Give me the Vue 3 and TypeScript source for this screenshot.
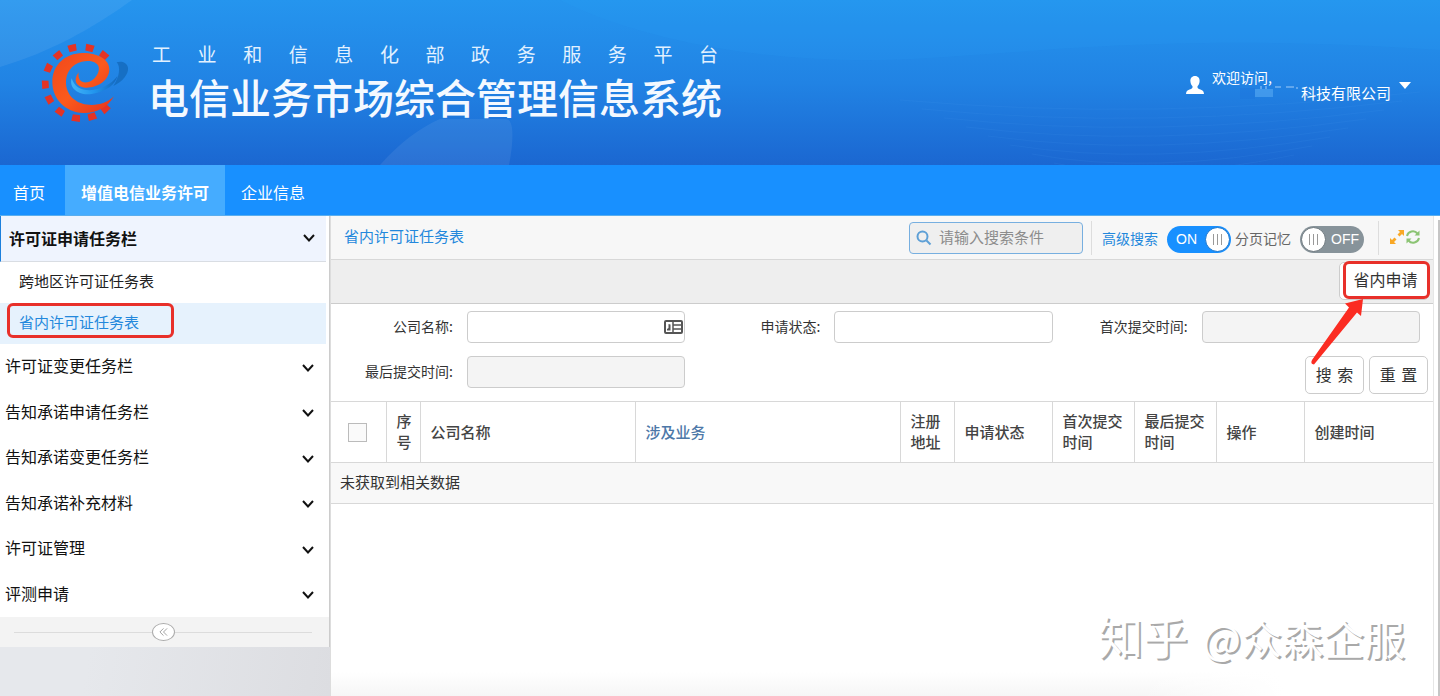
<script setup lang="ts">
import { ref } from 'vue'

interface Column {
  title: string
  cls: string
}

const keyword = ref('')
const advanced = ref(true)
const remember = ref(false)

const subItems: string[] = ['跨地区许可证任务表', '省内许可证任务表']
const groups: string[] = [
  '许可证变更任务栏',
  '告知承诺申请任务栏',
  '告知承诺变更任务栏',
  '告知承诺补充材料',
  '许可证管理',
  '评测申请',
]
const columns: Column[] = [
  { title: '序号', cls: 'c-index' },
  { title: '公司名称', cls: 'c-company' },
  { title: '涉及业务', cls: 'c-business' },
  { title: '注册地址', cls: 'c-address' },
  { title: '申请状态', cls: 'c-state' },
  { title: '首次提交时间', cls: 'c-first' },
  { title: '最后提交时间', cls: 'c-last' },
  { title: '操作', cls: 'c-action' },
  { title: '创建时间', cls: 'c-created' },
]
const teeth: number[] = [-104, -76, -50, -130, -156, -183, 152, 126, 98, 72, 47]
const ripples: number[] = [0, 1, 2, 3, 4, 5, 6, 7]
</script>

<template>
  <div class="page">
    <header class="banner">
      <svg class="banner-art" viewBox="0 0 1440 165" preserveAspectRatio="none" aria-hidden="true">
        <path d="M0 0H132C90 30 50 52 0 67Z" fill="#fff" fill-opacity=".07" />
        <path d="M380 165C400 142 420 128 440 119H506C514 119 514 140 509 165Z" fill="#fff" fill-opacity=".07" />
        <path d="M560 0C640 40 760 62 880 60S1150 30 1440 50V0Z" fill="#28a5f5" fill-opacity=".14" />
        <path
          v-for="n in ripples"
          :key="n"
          :d="`M${900 + n * 22} ${100 + n * 9}Q1150 ${122 + n * 9} ${1420 - n * 18} ${92 + n * 9}`"
          fill="none"
          stroke="#4aa0ee"
          stroke-opacity=".12"
        />
      </svg>
      <svg class="logo" viewBox="120 120 270 249" role="img" aria-label="工业和信息化部">
        <defs>
          <linearGradient id="flame" x1="0" y1="0" x2="1" y2="1">
            <stop offset="0" stop-color="#f0481c" />
            <stop offset=".5" stop-color="#fb5a1c" />
            <stop offset="1" stop-color="#e5321c" />
          </linearGradient>
          <linearGradient id="swoosh" x1="0" y1="0" x2="1" y2="0">
            <stop offset="0" stop-color="#41b4f8" />
            <stop offset=".5" stop-color="#2296ee" />
            <stop offset="1" stop-color="#1467bd" />
          </linearGradient>
        </defs>
        <g fill="#e43325">
          <path v-for="a in teeth" :key="a" d="M97 -11L117 -13V13L97 11Z" :transform="`translate(243 245) rotate(${a})`" />
        </g>
        <path
          d="M342 286C322 322 285 337 250 336C195 334 157 293 157 243C157 192 195 157 248 156C297 156 328 177 328 205C328 240 290 262 255 260C228 258 218 238 236 214C232 236 245 247 262 244C285 238 300 215 296 197C290 180 265 177 245 182C215 190 196 215 198 250C202 290 235 312 275 312C300 312 325 303 342 286Z"
          fill="url(#flame)"
        />
        <path d="M215 232C206 262 236 285 275 279C325 270 345 250 352 226C335 250 300 266 270 268C240 268 222 255 215 232Z" fill="url(#swoosh)" />
        <path d="M340 255C370 240 386 218 384 200C381 183 362 179 350 184C362 197 360 225 340 255Z" fill="#166fc4" />
      </svg>
      <div class="titles">
        <p class="platform">工 业 和 信 息 化 部 政 务 服 务 平 台</p>
        <h1 class="system">电信业务市场综合管理信息系统</h1>
      </div>
      <button class="account" type="button">
        <svg class="person" viewBox="0 0 18 18" aria-hidden="true">
          <path d="M9 0C5.800 0 4.200 2.300 4.400 5.200C4.500 7.500 5.400 9 6.500 10.200C6.800 12 6 12.600 3.500 13.600C1.200 14.500 .2 15.500 0 18H18C17.800 15.500 16.800 14.500 14.500 13.600C12 12.600 11.200 12 11.500 10.200C12.600 9 13.500 7.500 13.600 5.200C13.800 2.300 12.200 0 9 0Z" fill="#fff" />
        </svg>
        <span class="who">
          <span class="hello">欢迎访问,</span>
          <span class="company">
            <svg class="veil" viewBox="0 0 60 16" aria-hidden="true">
              <path d="M0 3H15V14H0Z" fill="#1b70dc" fill-opacity=".3" />
              <path d="M15 4H33V12H15Z" fill="#62b1f6" fill-opacity=".5" />
              <path d="M21 1V4M26 1V4M35 2H41M46 2H54M57 2V4" stroke="#d9edff" stroke-opacity=".7" fill="none" />
            </svg>
            <span>科技有限公司</span>
          </span>
        </span>
        <svg class="caret" viewBox="0 0 12 7" aria-hidden="true"><path d="M0 0H12L6 7Z" fill="#fff" /></svg>
      </button>
    </header>

    <nav class="nav">
      <a href="#home">首页</a>
      <a href="#license" class="active">增值电信业务许可</a>
      <a href="#company">企业信息</a>
    </nav>

    <div class="body">
      <aside class="side">
        <div class="menu">
          <button class="group open" type="button">
            <span>许可证申请任务栏</span>
            <svg class="chev" viewBox="0 0 12 8" aria-hidden="true"><path d="M1 1L6 6.500L11 1" /></svg>
          </button>
          <a v-for="(s, i) in subItems" :key="s" href="#task" class="sub" :class="{ current: i === 1 }">
            {{ s }}
            <span v-if="i === 1" class="mark"></span>
          </a>
          <button v-for="g in groups" :key="g" class="group" type="button">
            <span>{{ g }}</span>
            <svg class="chev low" viewBox="0 0 12 8" aria-hidden="true"><path d="M1 1L6 6.500L11 1" /></svg>
          </button>
        </div>
        <div class="collapse">
          <button type="button" class="fold" aria-label="收起">
            <svg viewBox="0 0 10 10" aria-hidden="true"><path d="M5 1L1 5L5 9M9 1L5 5L9 9" /></svg>
          </button>
        </div>
      </aside>

      <main class="main">
        <div class="bar">
          <h2 class="crumb">省内许可证任务表</h2>
          <div class="search">
            <svg viewBox="0 0 16 16" aria-hidden="true"><circle cx="6.500" cy="6.500" r="5" /><path d="M10.500 10.500L14.500 14.500" /></svg>
            <input v-model="keyword" type="text" placeholder="请输入搜索条件" aria-label="搜索条件" />
          </div>
          <div class="options">
            <label class="opt blue">
              <span>高级搜索</span>
              <input v-model="advanced" type="checkbox" />
              <span class="switch" :class="{ on: advanced }"><b>{{ advanced ? 'ON' : 'OFF' }}</b><i></i></span>
            </label>
            <label class="opt">
              <span>分页记忆</span>
              <input v-model="remember" type="checkbox" />
              <span class="switch" :class="{ on: remember }"><b>{{ remember ? 'ON' : 'OFF' }}</b><i></i></span>
            </label>
          </div>
          <div class="tools">
            <button type="button" aria-label="全屏">
              <svg viewBox="0 0 16 16" aria-hidden="true">
                <path d="M9 1H15V7L13 5L10.500 7.500L8.500 5.500L11 3ZM7 15H1V9L3 11L5.500 8.500L7.500 10.500L5 13Z" fill="#f9a825" />
              </svg>
            </button>
            <button type="button" aria-label="刷新">
              <svg viewBox="0 0 16 16" aria-hidden="true">
                <path d="M2 7A6 6 0 0 1 12.500 4.500M14 9A6 6 0 0 1 3.500 11.500" fill="none" stroke="#8cc474" stroke-width="2" />
                <path d="M14.500 1.500V6.500H9.500ZM1.500 14.500V9.500H6.500Z" fill="#8cc474" />
              </svg>
            </button>
          </div>
        </div>

        <div class="actions">
          <button class="btn apply" type="button">省内申请<span class="mark"></span></button>
          <svg class="arrow" viewBox="0 0 60 70" aria-hidden="true">
            <path d="M56 2L38 6.500L42 10.500L5 63Q3 67 7 67.500L50 15.500L54 19Z" fill="#fb2c22" />
          </svg>
        </div>

        <form class="filters" @submit.prevent>
          <div class="field">
            <label for="f-name">公司名称:</label>
            <div class="control">
              <input id="f-name" type="text" />
              <svg class="card" viewBox="0 0 19 14" aria-hidden="true">
                <rect x="1" y="1" width="17" height="12" rx="1" />
                <path d="M9 1V13M9 5H18M9 9H18" stroke-width="1.500" />
                <path d="M3 10.500V9L4.500 8V4L6.500 4.500V10.500Z" fill="#555" stroke="none" />
              </svg>
            </div>
          </div>
          <div class="field">
            <label for="f-state">申请状态:</label>
            <div class="control"><input id="f-state" type="text" /></div>
          </div>
          <div class="field">
            <label for="f-first">首次提交时间:</label>
            <div class="control"><input id="f-first" type="text" readonly /></div>
          </div>
          <div class="field">
            <label for="f-last">最后提交时间:</label>
            <div class="control"><input id="f-last" type="text" readonly /></div>
          </div>
          <div class="buttons">
            <button class="btn" type="submit">搜&emsp13;索</button>
            <button class="btn" type="reset">重&emsp13;置</button>
          </div>
        </form>

        <table class="grid">
          <thead>
            <tr>
              <th class="c-check"><input type="checkbox" aria-label="全选" /></th>
              <th v-for="c in columns" :key="c.title" :class="c.cls">{{ c.title }}</th>
            </tr>
          </thead>
          <tbody>
            <tr>
              <td :colspan="columns.length + 1">未获取到相关数据</td>
            </tr>
          </tbody>
        </table>
        <div class="haze"></div>
      </main>
      <div class="edge"></div>
    </div>
    <div class="watermark"><span class="brand">知乎</span> @众森企服</div>
  </div>
</template>

<style>
body {
  margin: 0;
}
</style>

<style scoped>
.page {
  position: relative;
  display: flex;
  flex-direction: column;
  min-height: 100vh;
  font-family: "Noto Sans CJK SC", sans-serif;
  font-size: 14px;
  color: #333;
  background: #fff;
}
.page * {
  box-sizing: border-box;
}
button,
input {
  font: inherit;
  color: inherit;
}
button {
  padding: 0;
  border: 0;
  background: none;
}
a {
  text-decoration: none;
}
svg {
  display: block;
}

.banner {
  position: relative;
  display: flex;
  align-items: center;
  height: 165px;
  padding: 0 29px 0 40px;
  color: #fff;
  background: linear-gradient(#2595ee, #2183e4 50%, #1b67d1);
}
.banner-art {
  position: absolute;
  inset: 0;
  width: 100%;
  height: 100%;
}
.logo {
  position: relative;
  width: 90px;
  height: 83px;
}
.titles {
  position: relative;
  width: 574px;
  margin-left: 18px;
}
.platform {
  margin: 0 4px 0 4px;
  font-size: 19px;
  line-height: 28px;
  text-align: justify;
  text-align-last: justify;
  color: #e2f1ff;
}
.system {
  margin: 0;
  padding-bottom: 2px;
  font-size: 41px;
  line-height: 56px;
  font-weight: 500;
  white-space: nowrap;
  color: #f4f9ff;
}
.account {
  position: relative;
  display: flex;
  align-items: center;
  gap: 8px;
  margin-left: auto;
  margin-top: 5px;
  color: #fff;
}
.person {
  width: 18px;
  height: 18px;
}
.who {
  display: flex;
  flex-direction: column;
  text-align: left;
}
.hello {
  line-height: 16px;
}
.company {
  display: flex;
  align-items: center;
  gap: 1px;
  padding-left: 28px;
  line-height: 16px;
  font-size: 15px;
}
.veil {
  width: 60px;
  height: 16px;
}
.caret {
  width: 12px;
  height: 7px;
}

.nav {
  display: flex;
  height: 51px;
  background: #1890ff;
  border-bottom: 1px solid #5aaeee;
}
.nav a {
  display: flex;
  align-items: center;
  padding: 3px 16px 0;
  font-size: 16px;
  color: #fff;
}
.nav a:first-child {
  padding: 3px 20px 0 13px;
}
.nav .active {
  font-weight: 700;
  background: #45acff;
}

.body {
  display: flex;
  flex: 1;
}
.side {
  flex: none;
  width: 330px;
  background: linear-gradient(100deg, #e6e8ec 40%, #dcdde1);
}
.menu {
  padding-right: 3px;
  background: #fff;
  border-right: 1px solid #ccc;
}
.group {
  display: flex;
  align-items: center;
  justify-content: space-between;
  width: 100%;
  height: 46px;
  padding: 0 12px 4px 5px;
  font-size: 16px;
  color: #111;
}
.group:nth-child(odd) {
  height: 45px;
}
.group.open {
  height: 46px;
  padding: 0 11px 2px 8px;
  font-weight: 700;
  background: #eff4fe;
  border-left: 1px solid #1c7fdc;
  border-bottom: 1px solid #d9dde3;
}
.chev {
  width: 12px;
  height: 8px;
  fill: none;
  stroke: #111;
  stroke-width: 2;
}
.chev.low {
  margin-top: 5px;
}
.sub {
  position: relative;
  display: flex;
  align-items: center;
  height: 41px;
  padding: 0 0 4px 19px;
  font-size: 15px;
  color: #222;
}
.sub.current {
  color: #2388dc;
  background: #e6f2fd;
}
.mark {
  position: absolute;
  border: 3px solid #e8302a;
  border-radius: 6px;
}
.sub .mark {
  inset: 0 auto 6px 7px;
  width: 167px;
}
.collapse {
  display: flex;
  align-items: center;
  justify-content: center;
  height: 30px;
  padding: 0 17px 0 14px;
  background: #f3f3f3;
  border-right: 1px solid #ccc;
}
.collapse::before,
.collapse::after {
  content: "";
  flex: 1;
  height: 1px;
  background: #dcdcdc;
}
.fold {
  display: grid;
  place-items: center;
  width: 23px;
  height: 18px;
  border: 1px solid #aaa;
  border-radius: 50%;
  background: #fff;
}
.fold svg {
  width: 9px;
  height: 10px;
  fill: none;
  stroke: #999;
}

.main {
  position: relative;
  display: flex;
  flex-direction: column;
  flex: 1;
  min-width: 0;
  border-right: 1px solid #e6e6e6;
  border-left: 1px solid #ddd;
}
.edge {
  width: 6px;
  margin-top: 4px;
  border-right: 2px solid #c6c6c6;
}
.bar {
  display: flex;
  align-items: center;
  height: 44px;
  padding: 0 12px 0 13px;
  background: #f7f7f7;
  border-bottom: 1px solid #d8d8d8;
}
.crumb {
  flex: 1;
  margin: 0;
  padding-bottom: 4px;
  font-size: 15px;
  font-weight: 400;
  color: #2388dc;
}
.search {
  display: flex;
  align-items: center;
  gap: 7px;
  width: 174px;
  height: 32px;
  padding: 0 6px;
  border: 1px solid #77afe0;
  border-radius: 4px;
  background: #efefef;
}
.search svg {
  flex: none;
  width: 16px;
  height: 16px;
  fill: none;
  stroke: #5d9fd6;
  stroke-width: 2;
}
.search input {
  width: 100%;
  min-width: 0;
  padding: 0 0 2px;
  border: 0;
  outline: 0;
  font-size: 15px;
  background: none;
}
.search input::placeholder {
  color: #8c8c8c;
}
.options {
  display: flex;
  gap: 4px;
  height: 34px;
  margin-left: 8px;
  padding: 0 14px 0 10px;
  border-left: 1px solid #ddd;
  border-right: 1px solid #ddd;
}
.opt {
  position: relative;
  display: flex;
  align-items: center;
  gap: 9px;
  color: #666;
}
.opt.blue {
  color: #2388dc;
}
.opt input {
  position: absolute;
  opacity: 0;
}
.switch {
  display: flex;
  flex-direction: row-reverse;
  align-items: center;
  justify-content: space-between;
  width: 64px;
  height: 27px;
  margin-top: 3px;
  padding: 0 5px 0 1px;
  border-radius: 14px;
  font-size: 14px;
  color: #fff;
  background: #87939a;
}
.switch.on {
  flex-direction: row;
  padding: 0 1px 0 9px;
  background: #1890ff;
}
.switch b {
  font-family: "Liberation Sans", sans-serif;
  font-weight: 400;
}
.switch i {
  width: 25px;
  height: 25px;
  border: 1px solid #6c777d;
  border-radius: 50%;
  background:
    linear-gradient(90deg, #999 1px, transparent 1px 4px, #999 4px 5px, transparent 5px 8px, #999 8px) center / 9px 11px no-repeat,
    #fff;
}
.switch.on i {
  border-color: #1775cf;
}
.tools {
  display: flex;
  padding: 0 0 2px 10px;
}
.tools svg {
  width: 16px;
  height: 16px;
}
.actions {
  position: relative;
  z-index: 1;
  display: flex;
  justify-content: flex-end;
  height: 44px;
  padding: 2px 4px 0 0;
  background: #eee;
  border-bottom: 1px solid #ccc;
}
.btn {
  width: 59px;
  height: 38px;
  padding: 0 0 2px;
  border: 1px solid #ccc;
  border-radius: 5px;
  font-size: 16px;
  color: #333;
  background: #fff;
}
.apply {
  position: relative;
  width: 90px;
  padding: 0 0 4px 3px;
}
.apply .mark {
  inset: -2px -2px 0 3px;
}
.arrow {
  position: absolute;
  top: 37px;
  right: 66px;
  width: 60px;
  height: 70px;
}
.filters {
  display: grid;
  grid-template-columns: repeat(3, 1fr);
  row-gap: 7px;
  padding: 7px 0;
}
.field {
  display: grid;
  grid-template-columns: 122px 1fr;
  align-items: start;
  column-gap: 14px;
  height: 38px;
  padding-right: 13px;
}
.field label {
  line-height: 30px;
  text-align: right;
}
.control {
  position: relative;
}
.control input {
  display: block;
  width: 100%;
  height: 32px;
  padding: 0 24px 0 8px;
  border: 1px solid #ccc;
  border-radius: 4px;
  background: #fff;
}
.control input:read-only {
  background: #f4f4f4;
}
.card {
  position: absolute;
  top: 9px;
  right: 2px;
  width: 19px;
  height: 14px;
  fill: none;
  stroke: #555;
  stroke-width: 2;
}
.buttons {
  display: flex;
  grid-column: 3;
  justify-content: flex-end;
  gap: 5px;
  padding-right: 5px;
}
.grid {
  width: 100%;
  table-layout: fixed;
  border-collapse: collapse;
  font-size: 15px;
  line-height: 21px;
}
.grid th {
  height: 61px;
  padding: 0 9px 2px 10px;
  border: 1px solid #d8d8d8;
  font-weight: 500;
  text-align: left;
  color: #444;
}
.grid th:first-child {
  border-left: 0;
}
.grid th:last-child {
  border-right: 0;
}
.grid td {
  height: 41px;
  padding: 0 9px 3px;
  border-top: 1px solid #d8d8d8;
  border-bottom: 1px solid #d8d8d8;
  background: #f8f8f8;
}
.grid .c-check {
  width: 55px;
  padding-bottom: 0;
}
.grid input {
  display: block;
  appearance: none;
  width: 19px;
  height: 19px;
  margin: 0 0 0 7px;
  border: 1px solid #bbb;
  background: #fafafa;
}
.c-index {
  width: 34px;
}
.c-company {
  width: 215px;
}
.grid .c-business {
  color: #4d78a8;
}
.c-address {
  width: 54px;
}
.c-state {
  width: 98px;
}
.c-first,
.c-last {
  width: 82px;
}
.c-action {
  width: 88px;
}
.c-created {
  width: 129px;
}
.haze {
  height: 24px;
  margin-top: auto;
  margin-right: 150px;
  background: linear-gradient(90deg, transparent 85%, #fff), linear-gradient(#fff, #f6f6f6);
}
.watermark {
  position: absolute;
  right: 35px;
  bottom: 30px;
  font-size: 41px;
  line-height: 58px;
  font-weight: 400;
  color: #fff;
  text-shadow: 2px 2px 0 #a9a9a9;
  pointer-events: none;
}
.brand {
  margin-right: 5px;
  font-size: 45px;
}
</style>
